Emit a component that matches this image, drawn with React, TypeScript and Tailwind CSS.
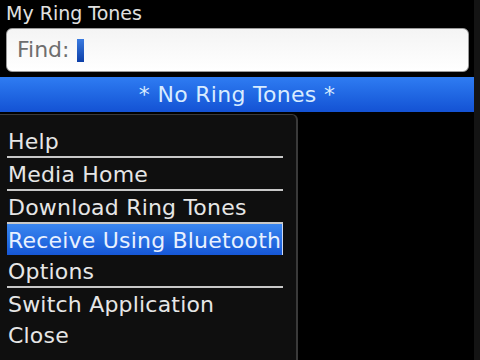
import React from "react";

const font = { fontFamily: '"DejaVu Sans", sans-serif' };

function Sep() {
  return <div className="h-[2px] bg-[#c8c8c8] ml-[7px] mr-[13px]" />;
}

function Item({ label, sel }: { label: string; sel?: boolean }) {
  if (sel) {
    return (
      <div className="ml-[7px] mr-[13px] h-[31px] flex items-center pt-[2px] pl-[1px] bg-gradient-to-b from-[#3a86f0] to-[#1657d6] border-r border-[#cfd8f0] text-[#e8f1ff] text-[22px] tracking-[0.2px] leading-none">
        {label}
      </div>
    );
  }
  return (
    <div className="ml-[8px] h-[31px] flex items-center pt-[2px] text-[#e6e6e6] text-[22px] tracking-[0.2px] leading-none">
      {label}
    </div>
  );
}

export default function App() {
  return (
    <div className="w-[480px] h-[360px] bg-black overflow-hidden flex" style={font}>
      <div className="w-[474px] flex flex-col">
        <div className="h-[26px] pl-[6px] pt-[3px] text-[19px] leading-[21px] text-[#e0e0e0]">My Ring Tones</div>
        <div className="ml-[6px] mr-[5px] mt-[2px] h-[44px] rounded-[6px] bg-gradient-to-b from-[#f4f4f4] to-white border border-[#9a9a9a] flex items-center pl-[10px]">
          <span className="text-[22px] text-[#6e6e6e] leading-none">Find:</span>
          <span className="ml-[7px] w-[7px] h-[23px] bg-gradient-to-b from-[#3b7be0] to-[#0d3fa8]" />
        </div>
        <div className="mt-[5px] h-[35px] bg-gradient-to-b from-[#2f7cf2] to-[#1452d4] flex items-center justify-center text-[22px] tracking-[0.3px] text-[#d8ecff] leading-none">
          * No Ring Tones *
        </div>
        <div className="flex-1 flex pt-[2px]">
          <div className="w-[298px] bg-[#0f0f0f] border-r-2 border-t border-[#3a3a3a] rounded-tr-[6px] pt-[10px]">
            <Item label="Help" />
            <Sep />
            <Item label="Media Home" />
            <Sep />
            <Item label="Download Ring Tones" />
            <Sep />
            <Item label="Receive Using Bluetooth" sel />
            <Item label="Options" />
            <Sep />
            <Item label="Switch Application" />
            <Item label="Close" />
          </div>
        </div>
      </div>
      <div className="flex-1 bg-[#141414]" />
    </div>
  );
}
